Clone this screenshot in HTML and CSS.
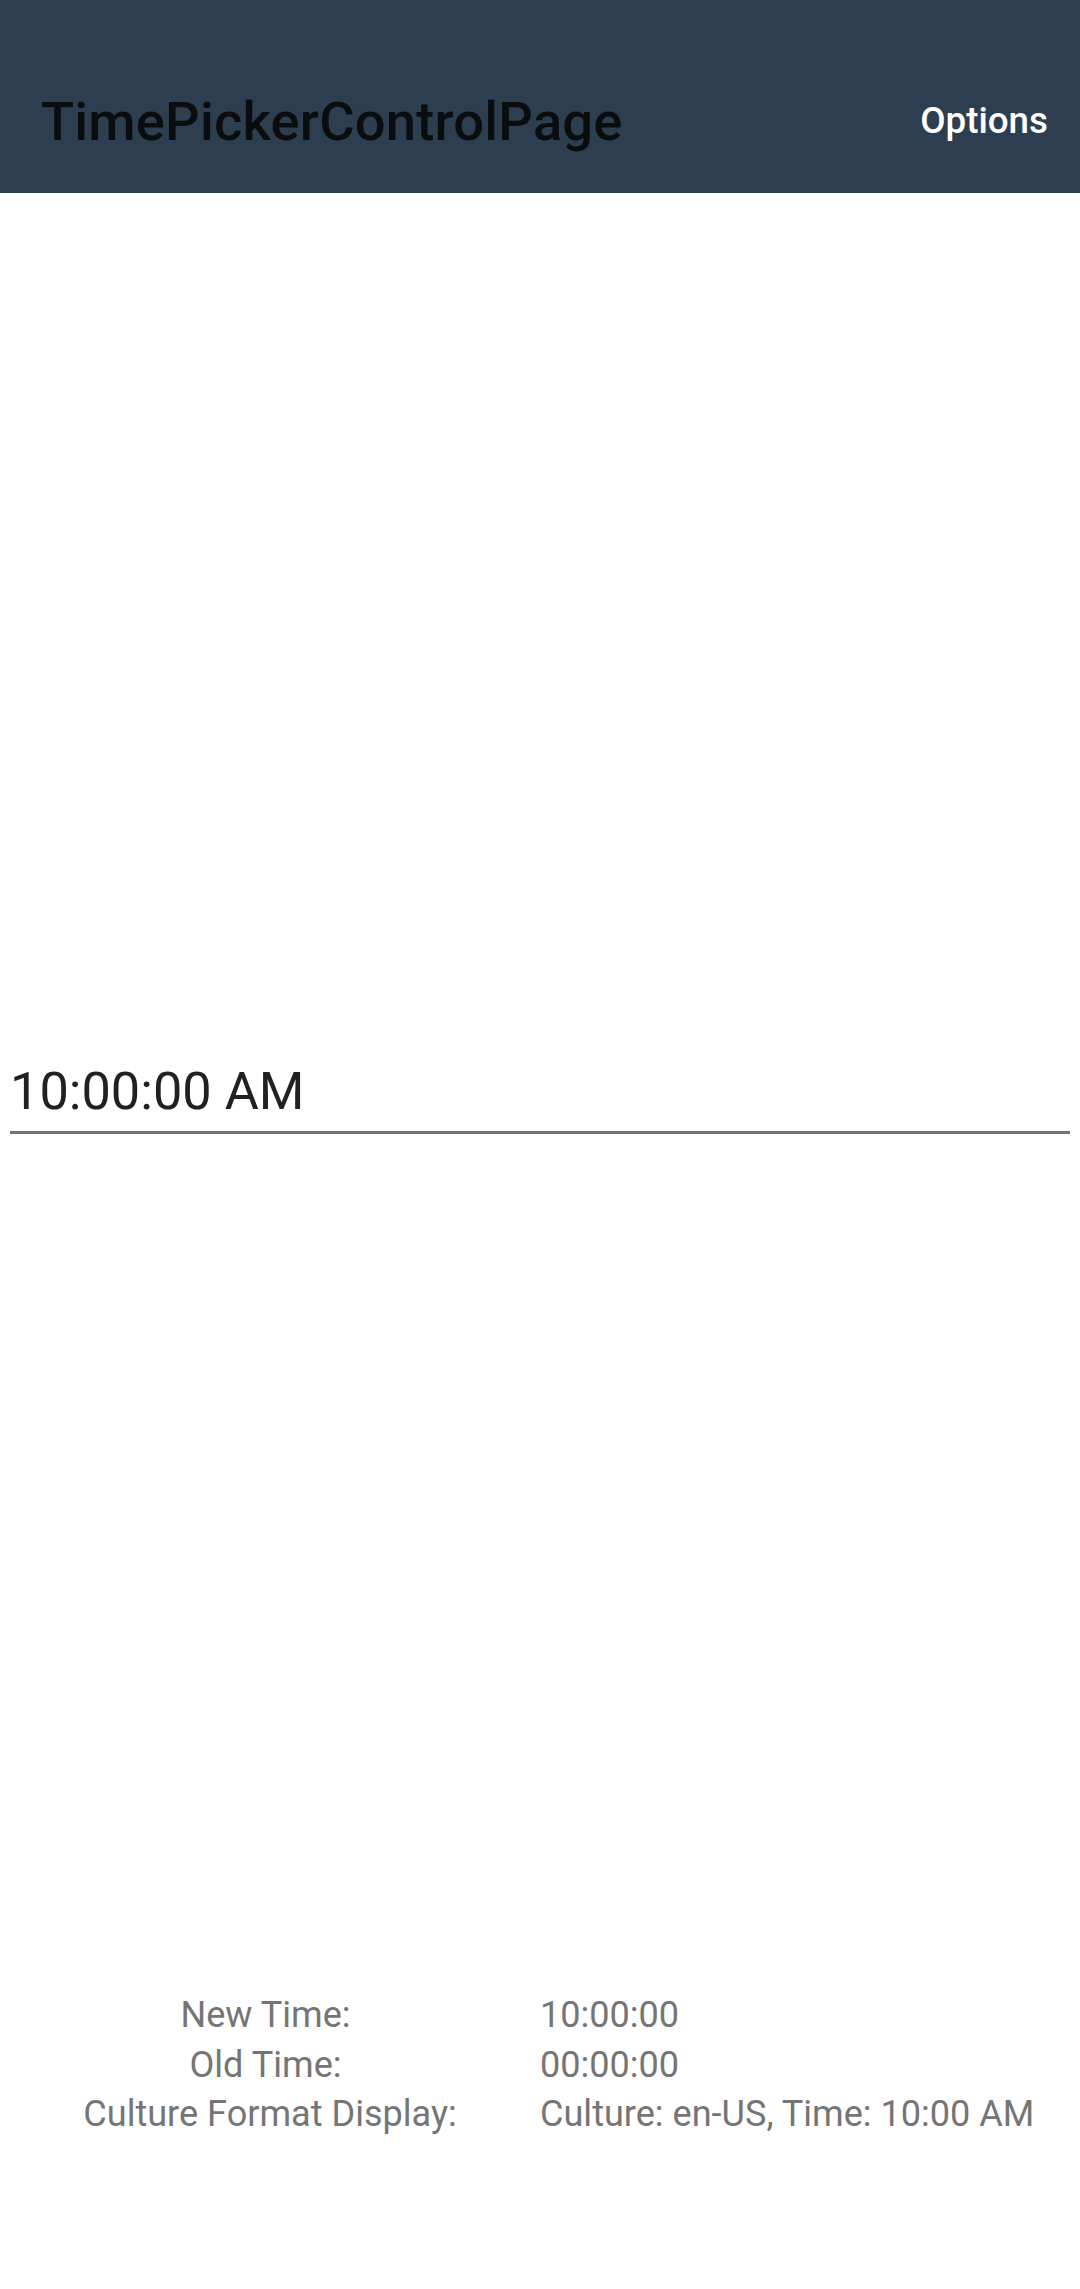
FILE: index.html
```html
<!DOCTYPE html>
<html lang="en">
<head>
<meta charset="utf-8">
<title>TimePickerControlPage</title>
<link rel="stylesheet" href="styles.css">
</head>
<body>
<div class="screen">
  <header class="appbar">
    <div class="toolbar">
      <h1 class="title">TimePickerControlPage</h1>
      <span class="action">Options</span>
    </div>
  </header>
  <main class="content">
    <div class="picker">
      <div class="picker-text">10:00:00 AM</div>
    </div>
    <div class="info">
      <div class="label">New Time:&nbsp;</div>
      <div class="value">10:00:00</div>
      <div class="label">Old Time:&nbsp;</div>
      <div class="value">00:00:00</div>
      <div class="label">Culture Format Display:</div>
      <div class="value">Culture: en-US, Time: 10:00 AM</div>
    </div>
  </main>
</div>
</body>
</html>
```

FILE: styles.css
```css
html, body {
  margin: 0;
  padding: 0;
  background: #ffffff;
}
.screen {
  width: 1080px;
  height: 2289px;
  display: flex;
  flex-direction: column;
  font-family: Roboto, "Noto Sans", sans-serif;
}
.appbar {
  background: #2e3e51;
  height: 193px;
  padding-top: 48px;
  box-sizing: border-box;
}
.toolbar {
  height: 145px;
  display: flex;
  align-items: center;
  justify-content: space-between;
  padding: 0 32px 0 41px;
}
.title {
  margin: 0;
  padding-top: 2px;
  font-size: 54.3px;
  font-weight: 500;
  color: #0b0c0e;
  letter-spacing: 0.2px;
}
.action {
  font-size: 36.75px;
  font-weight: 500;
  color: #ffffff;
}
.content {
  flex: 1;
  display: flex;
  flex-direction: column;
}
.picker {
  margin: 867px 10px 0 10px;
  border-bottom: 3px solid #737373;
  padding-bottom: 9px;
}
.picker-text {
  font-size: 52.3px;
  line-height: 62px;
  color: #212121;
}
.info {
  margin-top: 857px;
  display: grid;
  grid-template-columns: 540px 540px;
  font-size: 36.1px;
  line-height: 49.5px;
  color: #757575;
}
.label {
  text-align: center;
}
.value {
  text-align: left;
}
```
